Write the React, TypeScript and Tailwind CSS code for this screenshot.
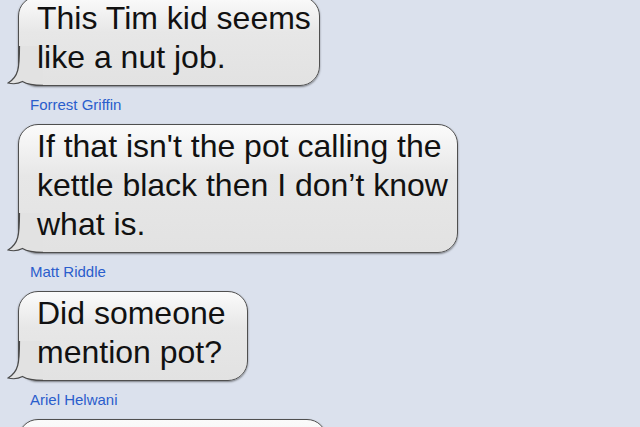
import React from "react";

type Message = {
  lines: string[];
  width: number;
  name?: string;
};

const messages: Message[] = [
  { lines: ["This Tim kid seems", "like a nut job."], width: 302, name: "Forrest Griffin" },
  {
    lines: ["If that isn't the pot calling the", "kettle black then I don\u2019t know", "what is."],
    width: 440,
    name: "Matt Riddle",
  },
  { lines: ["Did someone", "mention pot?"], width: 230, name: "Ariel Helwani" },
  { lines: ["", "", ""], width: 309 },
];

function Tail() {
  return (
    <svg
      className="absolute left-[-12px] bottom-[-1px]"
      width="36"
      height="40"
      viewBox="0 0 36 40"
    >
      <path
        d="M12.5 0 C12.5 22 11.5 31 1 37 Q9 39 15.5 35.5 C20 38.2 26 39.3 36 39.3 L36 0 Z"
        fill="#e2e2e2"
      />
      <path
        d="M12.5 0 C12.5 22 11.5 31 1 37 Q9 39 15.5 35.5 C20 38.2 26 39.3 36 39.3"
        fill="none"
        stroke="#4a4a4a"
        strokeWidth="1.2"
      />
    </svg>
  );
}

function Bubble({ lines, width }: { lines: string[]; width: number }) {
  return (
    <div
      className="relative rounded-[20px] border border-[#4f4f4f] bg-gradient-to-b from-[#fbfbfb] via-[#e7e7e7] via-40% to-[#e2e2e2] pl-[18px] pt-[2px] pb-[8px] text-[32px] leading-[39px] text-[#111] shadow-[0_1px_2px_rgba(0,0,0,0.45)]"
      style={{ width }}
    >
      <Tail />
      {lines.map((l, i) => (
        <div key={i} className="relative z-10 whitespace-nowrap h-[39px]">
          {l}
        </div>
      ))}
    </div>
  );
}

export default function App() {
  return (
    <div
      className="h-[427px] w-[640px] overflow-hidden bg-[#dbe1ed] pl-[18px]"
      style={{ fontFamily: '"Liberation Sans", Arial, sans-serif' }}
    >
      <div className="flex flex-col items-start mt-[-4px]">
        {messages.map((m, i) => (
          <React.Fragment key={i}>
            <Bubble lines={m.lines} width={m.width} />
            {m.name && (
              <div className="pl-[12px] my-[10px] text-[15px] leading-[18px] text-[#2a5dcc]">
                {m.name}
              </div>
            )}
          </React.Fragment>
        ))}
      </div>
    </div>
  );
}
